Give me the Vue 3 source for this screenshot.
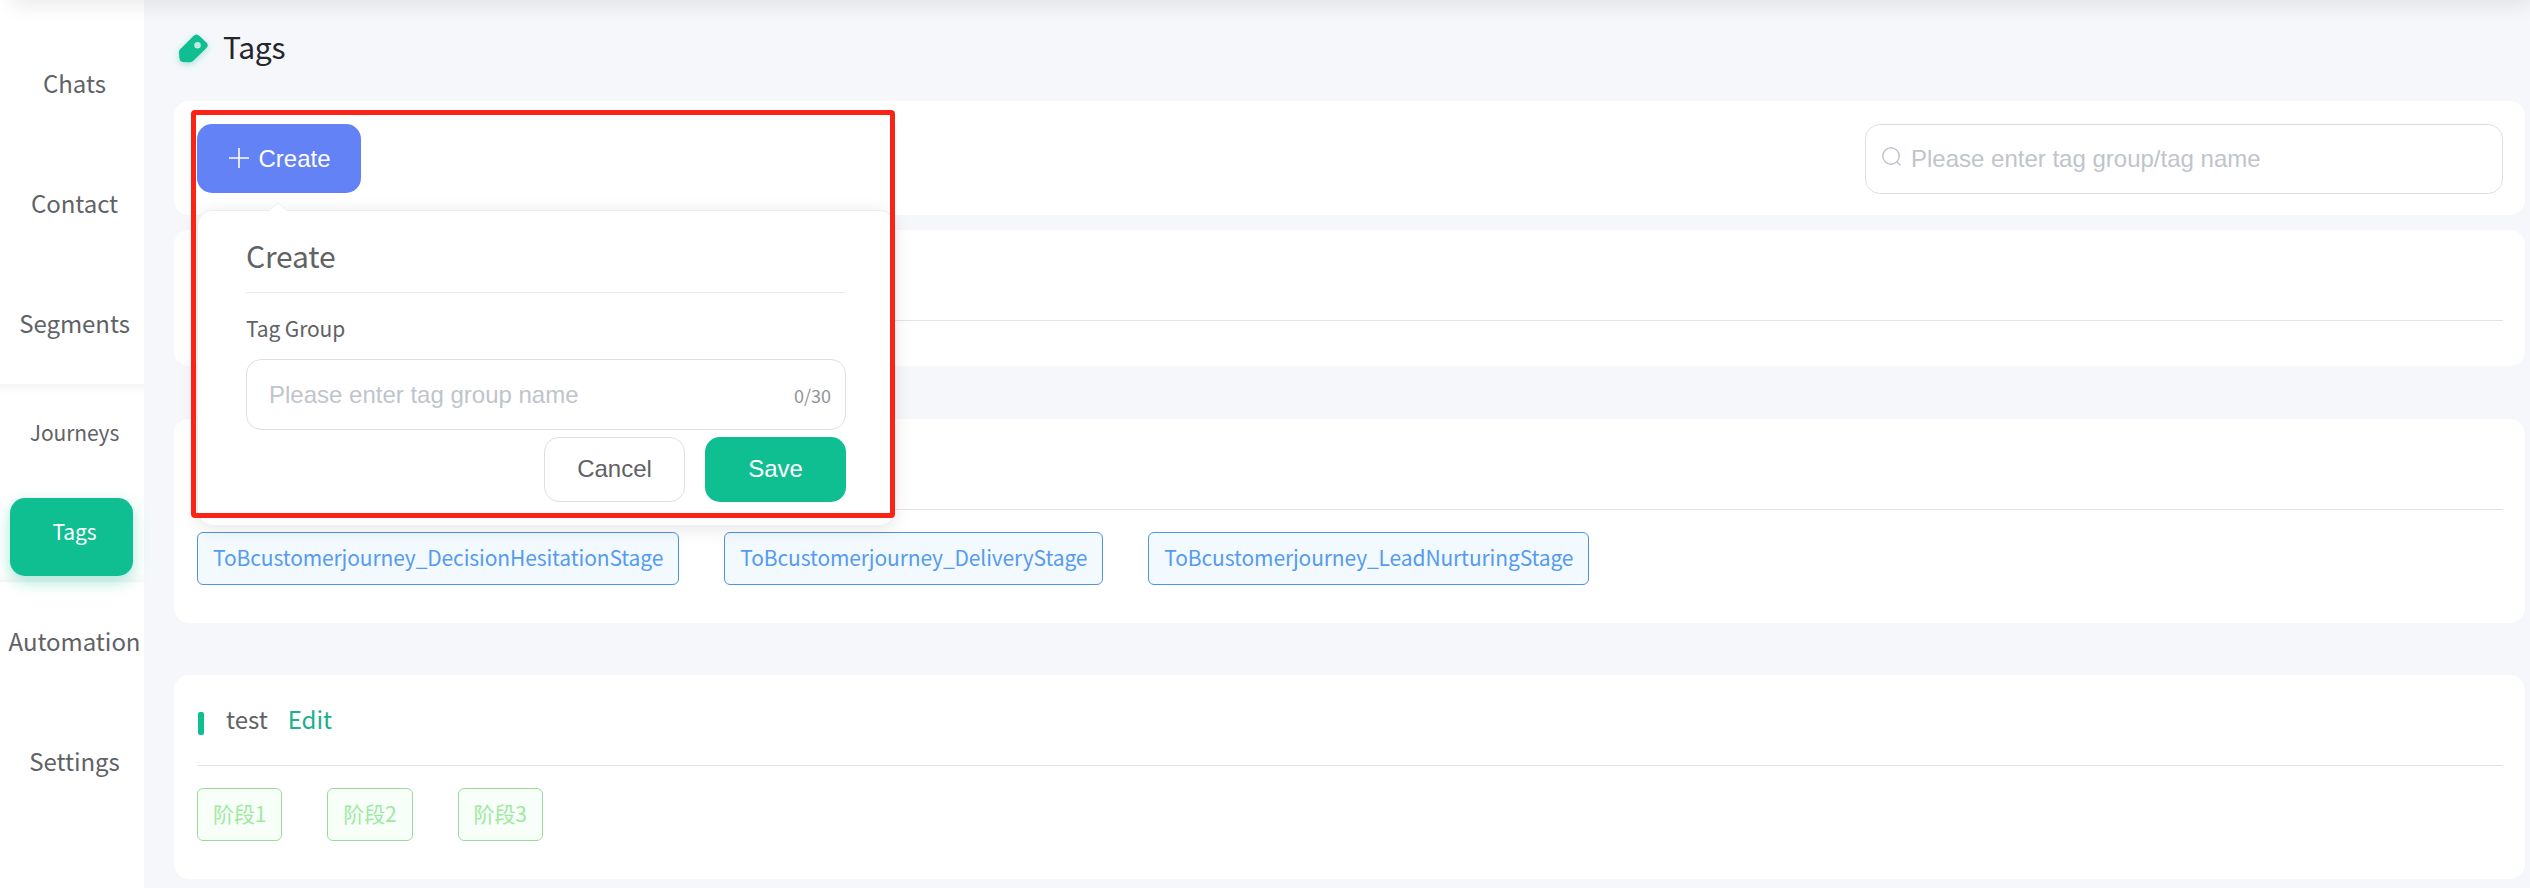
<script setup>
const topItems = ['Chats', 'Contact', 'Segments']
const subItems = [
  { label: 'Journeys', active: false },
  { label: 'Tags', active: true },
]
const bottomItems = ['Automation', 'Settings']

const groups = [
  { id: 'a', name: '', color: 'blue', tags: [] },
  {
    id: 'b',
    name: '',
    color: 'blue',
    tags: [
      'ToBcustomerjourney_DecisionHesitationStage',
      'ToBcustomerjourney_DeliveryStage',
      'ToBcustomerjourney_LeadNurturingStage',
    ],
  },
  { id: 'c', name: 'test', color: 'green', tags: ['阶段1', '阶段2', '阶段3'] },
]
</script>

<template>
  <div class="page">
    <nav class="sidebar">
      <a v-for="item in topItems" :key="item" class="nav-item">{{ item }}</a>
      <div class="submenu">
        <a v-for="item in subItems" :key="item.label" class="sub-item" :class="{ active: item.active }">
          <span>{{ item.label }}</span>
        </a>
      </div>
      <a v-for="item in bottomItems" :key="item" class="nav-item">{{ item }}</a>
    </nav>

    <main class="content">
      <header class="page-title">
        <svg class="tag-icon" width="40" height="40" viewBox="0 0 40 40">
          <path
            fill="#0fbe91"
            fill-rule="evenodd"
            d="M18.2 6.2Q21.3 2.800 24.500 6L31.600 12.700Q34 15.300 31.400 18L18.600 30.600Q17 32.200 14.800 32.200L7.500 32Q5 31.500 4.500 29L3.900 22.500Q3.800 20.600 5.200 19.200ZM22.500 12A3.300 3.300 0 1 0 22.500 18.600A3.300 3.300 0 1 0 22.500 12Z"
          />
        </svg>
        <h1>Tags</h1>
      </header>

      <section class="card toolbar">
        <button class="btn create">
          <svg width="20" height="20" viewBox="0 0 20 20">
            <path d="M10 0.500V19.500M0.500 10H19.500" stroke="#fff" stroke-width="1.600" stroke-linecap="round" />
          </svg>
          <span>Create</span>
        </button>
        <div class="search">
          <svg width="20" height="20" viewBox="0 0 20 20" fill="none" stroke="#c0c4cc" stroke-width="1.500">
            <circle cx="9" cy="9" r="8.200" />
            <path d="M15 15L18 18" stroke-linecap="round" />
          </svg>
          <span>Please enter tag group/tag name</span>
        </div>

        <div class="popover">
          <svg class="arrow" width="18" height="9" viewBox="0 0 18 9">
            <path d="M0 9L9 0.700L18 9" fill="#fff" stroke="#ebeef5" />
          </svg>
          <h2>Create</h2>
          <label>Tag Group</label>
          <div class="field">
            <span class="placeholder">Please enter tag group name</span>
            <span class="count">0/30</span>
          </div>
          <div class="actions">
            <button class="btn cancel">Cancel</button>
            <button class="btn save">Save</button>
          </div>
        </div>
        <div class="highlight"></div>
      </section>

      <div class="groups">
        <section v-for="g in groups" :key="g.id" class="card group">
          <div class="group-head">
            <template v-if="g.name">
              <i class="bar"></i>
              <span class="name">{{ g.name }}</span>
              <a class="edit">Edit</a>
            </template>
          </div>
          <div class="tags" :class="{ empty: !g.tags.length }">
            <span v-for="t in g.tags" :key="t" class="tag" :class="g.color">{{ t }}</span>
          </div>
        </section>
      </div>
    </main>
    <div class="top-shadow"></div>
  </div>
</template>

<style>
body {
  margin: 0;
  background: #f5f7fb;
}
</style>

<style scoped>
.page {
  position: relative;
  display: flex;
  width: 2530px;
  height: 888px;
  overflow: hidden;
  background: #f5f7fb;
  color: #606266;
  font-family: "Noto Sans CJK SC", "Noto Sans", sans-serif;
}
.page * {
  box-sizing: border-box;
}
.top-shadow {
  position: absolute;
  left: 15px;
  right: 0;
  top: -10px;
  height: 10px;
  box-shadow: 0 0 21px 4px rgba(0, 0, 0, 0.1);
}
.sidebar {
  flex: none;
  width: 144px;
  padding-top: 24px;
  background: #fff;
}
.nav-item {
  display: flex;
  align-items: center;
  justify-content: center;
  height: 120px;
  padding: 0 0 3px 5px;
  font-size: 24px;
  letter-spacing: -0.05px;
  white-space: nowrap;
}
.submenu {
  height: 198px;
  box-shadow: inset 0 15px 12px -12px rgba(0, 0, 0, 0.06), inset 0 -12px 12px -12px rgba(0, 0, 0, 0.07);
}
.sub-item {
  display: flex;
  height: 99px;
  align-items: center;
  justify-content: center;
  padding: 0 0 4px 5px;
  font-size: 21px;
  letter-spacing: -0.11px;
}
.sub-item.active {
  height: 78px;
  margin: 15px 11px 0 10px;
  padding: 0 0 13px 6px;
  border-radius: 15px;
  background: #0fbe91;
  color: #fff;
  box-shadow: 0 6px 15px rgba(15, 190, 145, 0.35);
}
.content {
  flex: 1;
  padding: 0 5px 0 30px;
}
.page-title {
  display: flex;
  align-items: center;
  height: 101px;
  padding-bottom: 9px;
}
.tag-icon {
  margin: 7px 8px 0 1px;
  filter: drop-shadow(0 2px 3px rgba(15, 190, 145, 0.35));
}
h1 {
  margin: 0;
  color: #24262c;
  font-size: 30px;
  font-weight: 400;
  letter-spacing: -0.3px;
  line-height: 44px;
}
.card {
  border-radius: 15px;
  background: #fff;
}
.toolbar {
  position: relative;
  display: flex;
  align-items: flex-start;
  justify-content: space-between;
  height: 114px;
  padding: 23px 22px 0 23px;
}
.btn {
  display: flex;
  align-items: center;
  justify-content: center;
  margin: 0;
  padding: 0;
  border: 0;
  border-radius: 15px;
  font: 24px "Liberation Sans", Arial, sans-serif;
}
.create {
  gap: 9px;
  width: 164px;
  height: 69px;
  padding-left: 2px;
  background: #6282f5;
  color: #fff;
}
.create svg {
  margin-top: -2px;
}
.search {
  display: flex;
  align-items: center;
  width: 638px;
  height: 70px;
  padding-left: 16px;
  border: 1px solid #dcdfe6;
  border-radius: 15px;
  color: #c0c4cc;
  font: 24px "Liberation Sans", Arial, sans-serif;
}
.search svg {
  margin: -4px 9px 0 0;
}
.popover {
  position: absolute;
  z-index: 2;
  left: 23px;
  top: 109px;
  width: 698px;
  height: 316px;
  padding: 22px 48px 0;
  border: 1px solid #ebeef5;
  border-radius: 15px;
  background: #fff;
  box-shadow: 0 3px 18px rgba(0, 0, 0, 0.1);
}
.arrow {
  position: absolute;
  left: 71px;
  top: -9px;
}
h2 {
  height: 60px;
  margin: 0;
  border-bottom: 1px solid #ebecef;
  font-size: 30px;
  font-weight: 400;
  letter-spacing: -0.2px;
  line-height: 44px;
}
label {
  display: block;
  height: 66px;
  padding-top: 19px;
  font-size: 21px;
  letter-spacing: -0.11px;
  line-height: 32px;
}
.field {
  display: flex;
  align-items: center;
  justify-content: space-between;
  height: 71px;
  padding: 0 14px 0 22px;
  border: 1px solid #dcdfe6;
  border-radius: 15px;
}
.placeholder {
  color: #c0c4cc;
  font: 24px "Liberation Sans", Arial, sans-serif;
}
.count {
  color: #909399;
  font-size: 18px;
}
.actions {
  display: flex;
  justify-content: flex-end;
  gap: 20px;
  padding-top: 7px;
}
.actions .btn {
  width: 141px;
  height: 65px;
  padding-bottom: 2px;
}
.actions .cancel {
  border: 1px solid #dcdfe6;
  background: #fff;
  color: #606266;
}
.save {
  background: #0fbe91;
  color: #fff;
}
.highlight {
  position: absolute;
  z-index: 3;
  left: 17px;
  top: 9px;
  width: 704px;
  height: 408px;
  border: 5px solid #fa2316;
  border-radius: 4px;
}
.groups {
  display: flex;
  flex-direction: column;
  padding-top: 15px;
}
.group {
  margin-bottom: 52px;
  padding: 0 22px 0 23px;
}
.group:first-child {
  margin-bottom: 53px;
}
.group-head {
  display: flex;
  align-items: center;
  height: 91px;
  border-bottom: 1px solid #e1e3e6;
  font-size: 24px;
}
.name,
.edit {
  margin-top: -3px;
}
.bar {
  width: 6px;
  height: 23px;
  margin: 7px 22px 0 1px;
  border-radius: 2px;
  background: #0fbe91;
}
.edit {
  margin-left: 20px;
  color: #1bb08c;
}
.tags {
  display: flex;
  gap: 45px;
  height: 113px;
  padding-top: 22px;
}
.tags.empty {
  height: 45px;
}
.tag {
  height: 53px;
  padding: 0 15px;
  border: 1px solid;
  border-radius: 6px;
  font-size: 21px;
  letter-spacing: -0.12px;
  line-height: 49px;
}
.blue {
  border-color: #4f94dc;
  background: #f2f9ff;
  color: #569bee;
}
.green {
  border-color: #98dc9c;
  background: #f8fff9;
  color: #9ce9a0;
}
</style>
